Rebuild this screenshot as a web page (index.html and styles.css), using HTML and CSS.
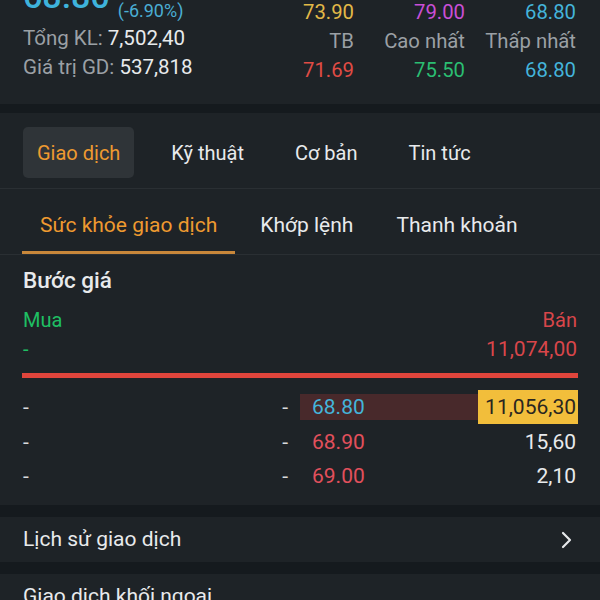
FILE: index.html
```html
<!DOCTYPE html>
<html lang="vi">
<head>
  <meta charset="UTF-8">
  <meta name="viewport" content="width=device-width, initial-scale=1.0">
  <title>68.80 - Giao dịch</title>
  <link rel="stylesheet" href="styles.css">
</head>
<body>

  <div class="quote">
    <div class="quote-left">
      <div class="price-row">
        <span class="last">68.80</span>
        <span class="change">(-6.90%)</span>
      </div>
      <p class="stat"><span class="label">Tổng KL:</span> 7,502,40</p>
      <p class="stat"><span class="label">Giá trị GD:</span> 537,818</p>
    </div>
    <div class="quote-grid">
      <span class="yellow">73.90</span>
      <span class="magenta">79.00</span>
      <span class="cyan">68.80</span>
      <span class="label">TB</span>
      <span class="label">Cao nhất</span>
      <span class="label">Thấp nhất</span>
      <span class="red">71.69</span>
      <span class="green">75.50</span>
      <span class="cyan">68.80</span>
    </div>
  </div>

  <div class="band band-top"></div>

  <div class="tabs">
    <div class="tab active">Giao dịch</div>
    <div class="tab">Kỹ thuật</div>
    <div class="tab">Cơ bản</div>
    <div class="tab">Tin tức</div>
  </div>

  <div class="subtabs">
    <div class="subtab active">Sức khỏe giao dịch</div>
    <div class="subtab">Khớp lệnh</div>
    <div class="subtab">Thanh khoản</div>
  </div>

  <div class="book">
    <h2 class="book-title">Bước giá</h2>
    <div class="sides">
      <span class="green-buy">Mua</span>
      <span class="red-sell">Bán</span>
      <span class="green-buy">-</span>
      <span class="red-sell total">11,074,00</span>
    </div>
    <div class="ratio"></div>

    <div class="book-row">
      <div class="bid"><span>-</span><span>-</span></div>
      <div class="ask">
        <div class="ask-bar" style="width: 64%"></div>
        <span class="price cyan">68.80</span>
        <span class="vol hl">11,056,30</span>
      </div>
    </div>
    <div class="book-row">
      <div class="bid"><span>-</span><span>-</span></div>
      <div class="ask">
        <span class="price pink">68.90</span>
        <span class="vol">15,60</span>
      </div>
    </div>
    <div class="book-row">
      <div class="bid"><span>-</span><span>-</span></div>
      <div class="ask">
        <span class="price pink">69.00</span>
        <span class="vol">2,10</span>
      </div>
    </div>
  </div>

  <div class="band"></div>
  <div class="link-row">
    <span>Lịch sử giao dịch</span>
    <svg class="chevron" width="14" height="18" viewBox="0 0 14 18">
      <path d="M3 2 L10 9 L3 16" fill="none" stroke="#e6e8ea" stroke-width="2.2" stroke-linecap="round" stroke-linejoin="round"/>
    </svg>
  </div>
  <div class="band"></div>
  <div class="link-row">
    <span>Giao dịch khối ngoại</span>
  </div>

</body>
</html>
```

FILE: styles.css
```css
* {
  box-sizing: border-box;
}

body {
  margin: 0;
  background-color: #1e2327;
  font-family: Roboto, "Noto Sans", sans-serif;
  font-size: 20px;
  color: #e8eaec;
}

p, h2 {
  margin: 0;
}

/* colours used for prices */
.yellow { color: #e2b947; }
.magenta { color: #c94fd6; }
.cyan { color: #44b4da; }
.red { color: #e04c45; }
.green { color: #2bbd72; }
.pink { color: #e2505c; }
.label { color: #9ba0a5; }

/* quote header */
.quote {
  display: flex;
  justify-content: space-between;
  height: 104px;
  padding: 0 24px 0 23px;
}

.price-row {
  display: flex;
  align-items: flex-start;
  gap: 8px;
  height: 24px;
}

.last {
  font-size: 34px;
  line-height: 34px;
  font-weight: 500;
  color: #3eb3dc;
  margin-top: -21px;
}

.change {
  font-size: 18px;
  line-height: 20px;
  margin-top: 1px;
  color: #4aaed3;
}

.stat {
  font-size: 20.5px;
  line-height: 29px;
}

.quote-grid {
  display: grid;
  grid-template-columns: 70px 111px 111px;
  margin-top: -2px;
  font-size: 20.3px;
  line-height: 29px;
  text-align: right;
  align-content: start;
}

.band {
  height: 12px;
  background-color: #151a1e;
}

.band-top {
  height: 9px;
}

/* main tabs */
.tabs {
  display: flex;
  gap: 23px;
  padding: 14px 23px 10px;
  border-bottom: 1px solid #2a2f33;
}

.tab {
  height: 51px;
  padding: 0 14px;
  display: flex;
  align-items: center;
  border-radius: 5px;
}

.tab.active {
  background-color: #2f3438;
  color: #ee9a30;
}

/* sub tabs */
.subtabs {
  display: flex;
  gap: 7px;
  height: 66px;
  padding: 0 22px;
  border-bottom: 1px solid #2a2f33;
}

.subtab {
  padding: 22px 18px 0;
  font-size: 21px;
  line-height: 28px;
  border-bottom: 3px solid transparent;
}

.subtab.active {
  color: #ee9a30;
  border-bottom-color: #c8873a;
}

/* order book */
.book {
  padding: 10px 22px 11.5px;
}

.book-title {
  font-size: 22.5px;
  font-weight: 500;
  line-height: 30px;
  padding-left: 1px;
}

.sides {
  display: grid;
  grid-template-columns: 1fr 1fr;
  margin-top: 11px;
  line-height: 29px;
  padding: 0 1px;
}

.green-buy { color: #1fbf63; }

.red-sell {
  color: #d8464a;
  text-align: right;
}

.total {
  font-size: 21px;
}

.ratio {
  height: 5px;
  margin: 9px 0 12px;
  background-color: #e0453c;
}

.book-row {
  display: grid;
  grid-template-columns: 1fr 1fr;
  height: 34.5px;
  font-size: 21px;
}

.bid {
  display: flex;
  justify-content: space-between;
  align-items: center;
  padding: 0 12px 0 1px;
  color: #d9dbdd;
}

.ask {
  position: relative;
  display: flex;
  justify-content: space-between;
  align-items: center;
  padding-left: 12px;
}

.ask-bar {
  position: absolute;
  left: 0;
  top: 4px;
  bottom: 5px;
  background-color: #48292b;
}

.price, .vol {
  position: relative;
}

.vol {
  padding-right: 2px;
}

.vol.hl {
  width: 100px;
  height: 34px;
  line-height: 34px;
  text-align: right;
  background-color: #f2be3b;
  color: #2a2620;
}

/* link rows */
.link-row {
  height: 45px;
  display: flex;
  align-items: center;
  justify-content: space-between;
  padding: 0 26px 0 23px;
  font-size: 21px;
}

.link-row span {
  margin-top: -2px;
}
```
